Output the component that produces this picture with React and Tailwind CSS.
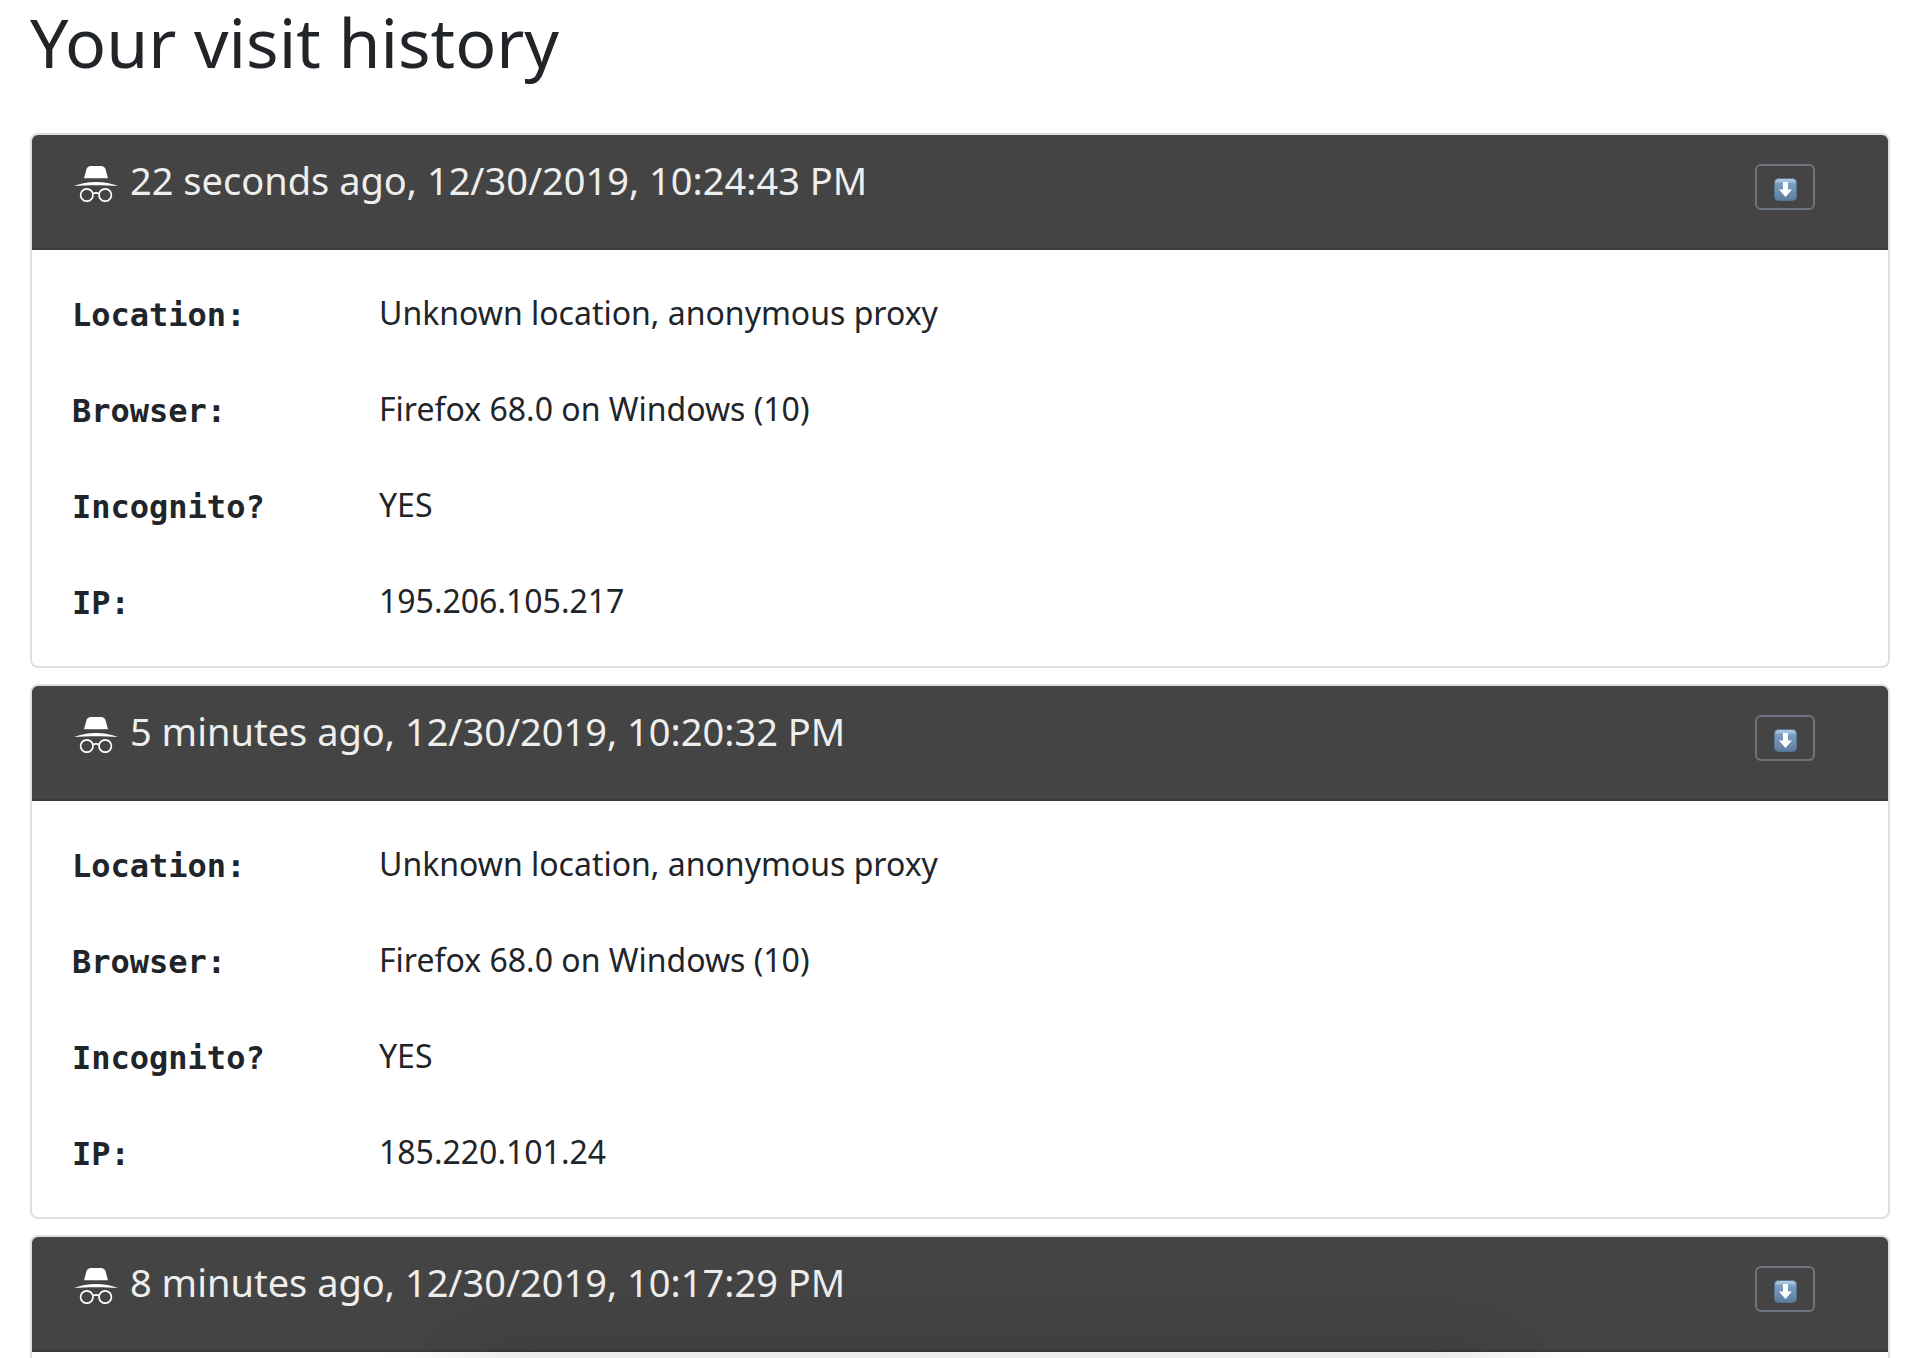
import React from 'react';

const visits = [
  {
    id: 1,
    when: '22 seconds ago, 12/30/2019, 10:24:43 PM',
    details: [
      { label: 'Location:', value: 'Unknown location, anonymous proxy' },
      { label: 'Browser:', value: 'Firefox 68.0 on Windows (10)' },
      { label: 'Incognito?', value: 'YES' },
      { label: 'IP:', value: '195.206.105.217' },
    ],
  },
  {
    id: 2,
    when: '5 minutes ago, 12/30/2019, 10:20:32 PM',
    details: [
      { label: 'Location:', value: 'Unknown location, anonymous proxy' },
      { label: 'Browser:', value: 'Firefox 68.0 on Windows (10)' },
      { label: 'Incognito?', value: 'YES' },
      { label: 'IP:', value: '185.220.101.24' },
    ],
  },
  {
    id: 3,
    when: '8 minutes ago, 12/30/2019, 10:17:29 PM',
    details: [],
  },
];

const App = () => {
  return (
    <div className='relative h-screen overflow-hidden bg-white pl-[30px] pr-5 font-["Noto_Sans",sans-serif] text-[#212529]'>
      <h1 className="mb-[49px] text-[68px] leading-21">Your visit history</h1>

      <div className="flex flex-col gap-4">
        {visits.map((visit) => (
          <VisitCard key={visit.id} visit={visit} />
        ))}
      </div>

      {/* Soft shadow rising from the bottom edge */}
      <div className="pointer-events-none absolute left-[24%] right-[21%] top-full h-60 shadow-[0_0_90px_rgba(0,0,0,0.17)]" />
    </div>
  );
};

function VisitCard({ visit }) {
  return (
    <section className="overflow-hidden rounded-lg border-2 border-[#dfdfdf] bg-white">
      <header className="flex h-[115px] items-start justify-between border-b-2 border-[#3c3b3b] bg-[#444444] pl-[42px] pr-[73px] pt-[17px]">
        <h2 className="flex items-center gap-3 text-[38px] leading-14 text-[#eeeeee]">
          <IncognitoIcon />
          {visit.when}
        </h2>
        <button
          type="button"
          aria-label="Toggle details"
          className="mt-3 flex h-[46px] w-[60px] items-center justify-center rounded-md border-2 border-[#6c757d] pt-1"
        >
          <DownArrowIcon />
        </button>
      </header>

      <dl className="min-h-20 px-10 pt-[15px] pb-[17px]">
        {visit.details.map((item) => (
          <div key={item.label} className="flex h-24 items-center">
            <dt className='w-[307px] shrink-0 pt-1 font-["DejaVu_Sans_Mono",monospace] text-[32px] font-bold leading-12'>
              {item.label}
            </dt>
            <dd className="text-[32px] leading-12">{item.value}</dd>
          </div>
        ))}
      </dl>
    </section>
  );
}

/* Hat and glasses */
function IncognitoIcon() {
  return (
    <svg className="mt-2 h-9 w-11 shrink-0" viewBox="0 0 44 36" fill="none">
      <path
        d="M10 12.3 12.4 3.6C13 1.2 14.6 0 17 0h10c2.4 0 4 1.2 4.6 3.6L34 12.3Z"
        fill="#fff"
      />
      <path d="M0 20C7 17.2 14 16 22 16s15 1.200 22 4c-7-.5-14-.7-22-.7S7 19.500 0 20Z" fill="#fff" />
      <circle cx="12.800" cy="29" r="6.200" stroke="#fff" strokeWidth="1.700" />
      <circle cx="31.200" cy="29" r="6.200" stroke="#fff" strokeWidth="1.700" />
      <path d="M19 27.600c2-1 4-1 6 0" stroke="#fff" strokeWidth="1.700" />
    </svg>
  );
}

function DownArrowIcon() {
  return (
    <svg className="size-[23px]" viewBox="0 0 23 23">
      <defs>
        <linearGradient id="keycap" x1="0" y1="0" x2="0" y2="1">
          <stop offset="0" stopColor="#b5cbe0" />
          <stop offset="0.14" stopColor="#a3bfda" />
          <stop offset="0.22" stopColor="#7d9fc1" />
          <stop offset="1" stopColor="#5c7c9c" />
        </linearGradient>
      </defs>
      <rect x="0.500" y="0.500" width="22" height="22" rx="4" fill="url(#keycap)" stroke="#56748f" />
      <path d="M9 4h5v7.500h4L11.500 19 5 11.500h4Z" fill="#fff" />
    </svg>
  );
}

export default App;
